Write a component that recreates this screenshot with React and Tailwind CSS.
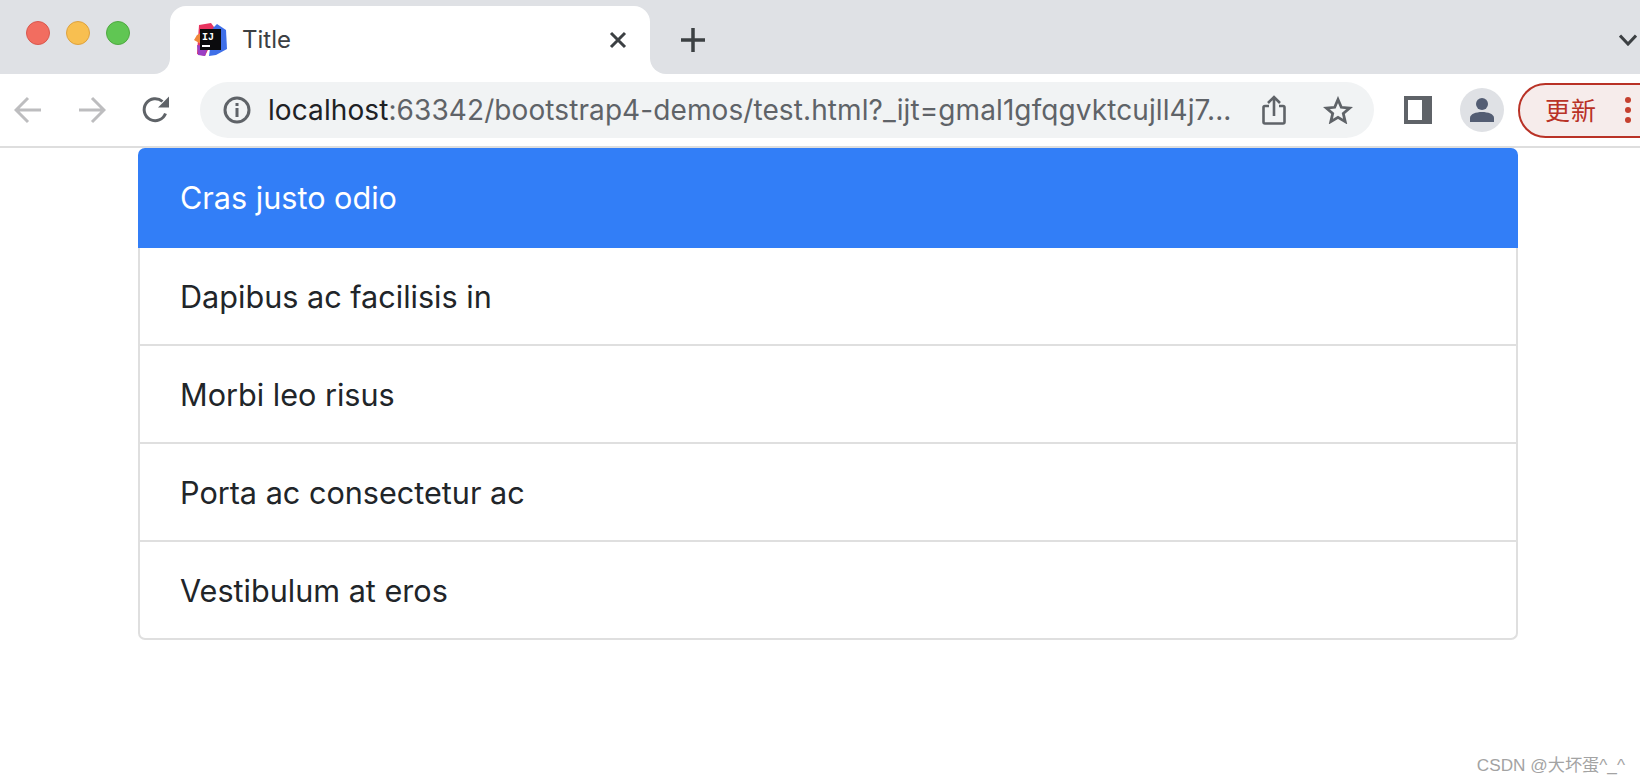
import React from 'react';

const items = ['Dapibus ac facilisis in', 'Morbi leo risus', 'Porta ac consectetur ac', 'Vestibulum at eros'];

const IdeaLogo = () => (
  <svg width="34" height="34" viewBox="0 0 34 34" className="shrink-0">
    <path d="M5 2 L17 0 L23 8 L11 33 L3 31 Z" fill="#e8345f" />
    <path d="M3 12 L7 10 L7 21 L0 17 Z" fill="#f0873a" />
    <path d="M3 22 L14 24 L11 33 L4 32 Z" fill="#9a3fc4" />
    <path d="M23 1 L32 7 L33 26 L22 32 L15 33 L19 5 Z" fill="#3f6fe8" />
    <rect x="6" y="6" width="21" height="21" fill="#0b0b0d" />
    <text x="8" y="16.5" fontSize="10" fontWeight="700" fontFamily="'Liberation Mono', monospace" fill="#fff">IJ</text>
    <rect x="8" y="22" width="8" height="2" fill="#fff" />
  </svg>
);

const Reload = () => (
  <svg width="32" height="32" viewBox="0 0 32 32" fill="none">
    <path d="M25.5 19.5 A11 11 0 1 1 22.5 7.5" stroke="#5f6368" strokeWidth="3" />
    <path d="M18 13.5 H29 V2.5 Z" fill="#5f6368" />
  </svg>
);

const Arrow = ({ flip }) => (
  <svg width="28" height="28" viewBox="0 0 28 28" fill="none" className={flip ? 'rotate-180' : ''}>
    <path d="M27 14 H2 M14 2 L2 14 L14 26" stroke="#bdbdbf" strokeWidth="3" />
  </svg>
);

const App = () => {
  return (
    <div className="relative h-[784px] w-[1640px] overflow-hidden bg-white font-['Inter',sans-serif]">
      {/* tab strip */}
      <div className="flex h-[74px] bg-white">
        <div className="flex w-[170px] shrink-0 items-start gap-[16px] rounded-br-[16px] bg-[#dfe1e5] pl-[26px] pt-[21px]">
          <span className="h-6 w-6 rounded-full border border-[#d9584e] bg-[#f26d60]" />
          <span className="h-6 w-6 rounded-full border border-[#dea23f] bg-[#f8bf50]" />
          <span className="h-6 w-6 rounded-full border border-[#4fa941] bg-[#60c653]" />
        </div>
        <div className="w-[480px] shrink-0 bg-[#dfe1e5] pt-[6px]">
          <div className="flex h-full items-center rounded-t-[16px] bg-white pl-[24px] pr-[23px]">
            <IdeaLogo />
            <span className="ml-[14px] flex-1 text-[24px] text-[#3c4043]">Title</span>
            <svg width="18" height="18" viewBox="0 0 18 18" fill="none">
              <path d="M2 2 L16 16 M16 2 L2 16" stroke="#3c4043" strokeWidth="3" />
            </svg>
          </div>
        </div>
        <div className="flex flex-1 items-center justify-between rounded-bl-[16px] bg-[#dfe1e5] pl-[31px] pr-[3px]">
          <svg width="24" height="24" viewBox="0 0 24 24" fill="none" className="mt-[6px]">
            <path d="M12 0 V24 M0 12 H24" stroke="#3c4043" strokeWidth="3.5" />
          </svg>
          <svg width="18" height="12" viewBox="0 0 18 12" fill="none" className="mt-[6px]">
            <path d="M1 1.5 L9 10 L17 1.5" stroke="#3c4043" strokeWidth="3" />
          </svg>
        </div>
      </div>

      {/* toolbar */}
      <div className="flex h-[74px] items-center border-b-2 border-[#dedede]">
        <div className="flex w-[200px] shrink-0 items-center pl-[14px]">
          <Arrow />
          <div className="ml-[36px]"><Arrow flip /></div>
          <div className="ml-[34px]"><Reload /></div>
        </div>
        <div className="flex h-[56px] w-[1174px] shrink-0 items-center rounded-full bg-[#f1f3f4] pl-[23px] pr-[21px]">
          <svg width="28" height="28" viewBox="0 0 28 28" fill="none" className="shrink-0">
            <circle cx="14" cy="14" r="12" stroke="#5f6368" strokeWidth="3" />
            <rect x="12.5" y="12" width="3" height="9" fill="#5f6368" />
            <rect x="12.5" y="7" width="3" height="3" fill="#5f6368" />
          </svg>
          <div className="ml-[17px] min-w-0 flex-1 truncate text-[28px] tracking-[0.09px] text-[#5f6368]">
            <span className="text-[#202124]">localhost</span>:63342/bootstrap4-demos/test.html?_ijt=gmal1gfqgvktcujll4j7...
          </div>
          <svg width="24" height="30" viewBox="0 0 24 30" fill="none" className="ml-[30px] shrink-0">
            <path d="M7 11 H3 A1.5 1.5 0 0 0 1.5 12.5 V27 A1.5 1.5 0 0 0 3 28.5 H21 A1.5 1.5 0 0 0 22.5 27 V12.5 A1.5 1.5 0 0 0 21 11 H17 M12 21 V2 M6 8 L12 2 L18 8" stroke="#5f6368" strokeWidth="2.6" />
          </svg>
          <svg width="30" height="28" viewBox="0 0 30 28" fill="none" className="ml-[37px] shrink-0">
            <path d="M15 3.5 L18.3 11.3 L26.6 12 L20.3 17.5 L22.2 25.6 L15 21.3 L7.8 25.6 L9.7 17.5 L3.4 12 L11.7 11.3 Z" stroke="#5f6368" strokeWidth="2.8" strokeLinejoin="miter" />
          </svg>
        </div>
        <div className="ml-[30px] h-[28px] w-[28px] shrink-0 border-[4px] border-r-[10px] border-[#5f6368] bg-white" />
        <div className="ml-[28px] flex h-11 w-11 shrink-0 items-center justify-center rounded-full bg-[#dfe1e5]">
          <svg width="26" height="24" viewBox="0 0 26 24">
            <circle cx="13" cy="6" r="6" fill="#535d73" />
            <path d="M1 24 V20 C1 16 7 14 13 14 C19 14 25 16 25 20 V24 Z" fill="#535d73" />
          </svg>
        </div>
        <div className="ml-[14px] flex h-[55px] w-[160px] shrink-0 items-center rounded-full border-2 border-[#b93226] bg-[#f6eceb] pl-[25px]">
          <span className="font-['Noto_Sans_CJK_SC',sans-serif] text-[25px] tracking-[1px] text-[#b93226]">更新</span>
          <span className="ml-[28px] flex flex-col gap-[4px]">
            <span className="h-[6px] w-[6px] rounded-full bg-[#c5402f]" />
            <span className="h-[6px] w-[6px] rounded-full bg-[#c5402f]" />
            <span className="h-[6px] w-[6px] rounded-full bg-[#c5402f]" />
          </span>
        </div>
      </div>

      {/* list group */}
      <ul className="mx-[138px] w-[1380px] text-[30.6px] text-[#212529]">
        <li className="flex h-[100px] items-center rounded-t-[7px] bg-[#327ef7] px-[42px] text-white">Cras justo odio</li>
        {items.map((item, i) => (
          <li
            key={item}
            className={`flex h-[98px] items-center border-x-2 border-b-2 border-[#dfdfdf] px-[40px] pt-[2px] ${i === items.length - 1 ? 'rounded-b-[7px]' : ''}`}
          >
            {item}
          </li>
        ))}
      </ul>

      {/* watermark */}
      <div className="absolute bottom-[5px] right-[15px] font-['Liberation_Sans','Noto_Sans_CJK_SC',sans-serif] text-[17.2px] text-[#a3a3a3]">
        CSDN @大坏蛋^_^
      </div>
    </div>
  );
};

export default App;
